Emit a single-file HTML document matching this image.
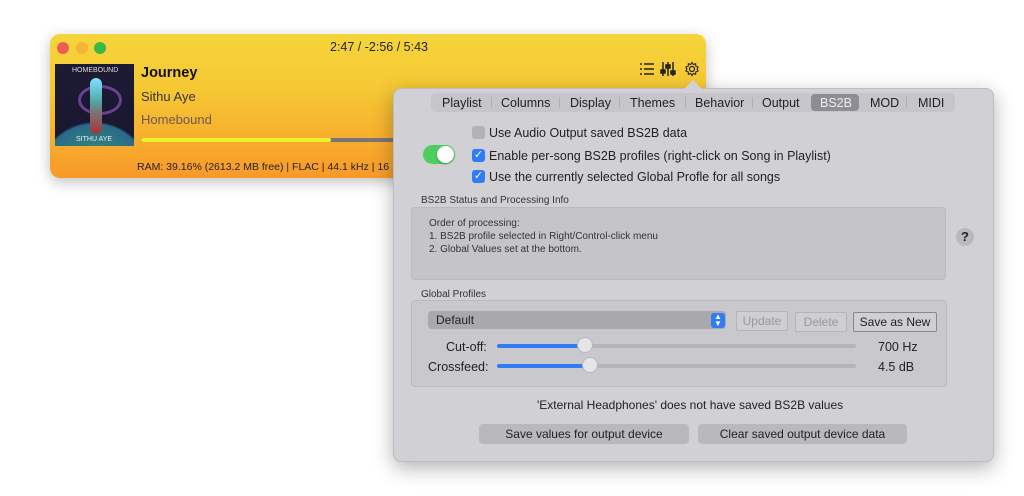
<!DOCTYPE html><html><head><style>
body{margin:0;width:1024px;height:496px;background:#fff;position:relative;overflow:hidden;font-family:"Liberation Sans",sans-serif;}
.a{position:absolute;white-space:nowrap}
.win{left:50px;top:34px;width:656px;height:144px;border-radius:10px;background:linear-gradient(#f5d53a 0%,#f6c733 40%,#f8992a 100%);box-shadow:0 4px 14px rgba(0,0,0,.25);overflow:hidden}
.dot{width:12px;height:12px;border-radius:6px;top:42px}
.pop{left:393px;top:88px;width:599px;height:372px;background:#d1d0d4;border-radius:8px;box-shadow:0 6px 20px rgba(0,0,0,.3);border:1px solid #bdbcc0}
.t{font-size:12.5px;color:#222;top:96px}
.sep{width:1px;height:11px;background:#b0afb4;top:97px}
.cb{width:13px;height:13px;border-radius:3px;background:#2f7cf6;color:#fff;font-size:11px;line-height:13px;text-align:center}
.l{font-size:12.5px;color:#222}
.s{font-size:10px;color:#333}
.btn{border:1px solid #b5b4b8;background:#cfced2;font-size:12px;color:#999;text-align:center;line-height:18px;border-radius:2px}
.trk{height:4px;background:#b5b4b9;border-radius:2px}
.knob{width:14px;height:14px;border-radius:8px;background:#e5e5e7;border:1px solid #b8b8bb}
</style></head><body>
<div class="a win"></div>
<div class="a dot" style="left:57px;background:#ee5b55"></div>
<div class="a dot" style="left:76px;background:#f2b43a"></div>
<div class="a dot" style="left:94px;background:#3cb849"></div>
<div class="a" style="left:330px;top:40px;font-size:12.5px;color:#222">2:47 / -2:56 / 5:43</div>
<div class="a" style="left:55px;top:64px;width:79px;height:82px;background:radial-gradient(circle at 50% 140%,#3a9a6a 0,#2a6a8a 45%,#1a1830 47%,#1d1a33 100%)"></div>
<div class="a" style="left:78px;top:85px;width:38px;height:24px;border-radius:50%;border:3px solid #7a4aa8;opacity:.8"></div>
<div class="a" style="left:90px;top:78px;width:12px;height:56px;background:linear-gradient(#7fe1ff,#5aa 40%,#777 60%,#a33);border-radius:6px"></div>
<div class="a" style="left:72px;top:67px;font-size:7px;color:#ddd">HOMEBOUND</div>
<div class="a" style="left:76px;top:136px;font-size:7px;color:#eee">SITHU AYE</div>
<div class="a" style="left:141px;top:65px;font-size:14.5px;font-weight:bold;color:#111">Journey</div>
<div class="a" style="left:141px;top:89px;font-size:13px;color:#333">Sithu Aye</div>
<div class="a" style="left:141px;top:112px;font-size:13px;color:#6a5a52">Homebound</div>
<div class="a" style="left:141px;top:138px;width:254px;height:4px;background:#777"></div>
<div class="a" style="left:141px;top:138px;width:190px;height:4px;background:#eef22a;border-radius:2px"></div>
<div class="a" style="left:137px;top:161px;font-size:10.5px;color:#222">RAM: 39.16% (2613.2 MB free) | FLAC | 44.1 kHz | 16</div>
<svg class="a" style="left:638px;top:60px" width="66" height="18" viewBox="0 0 66 18">
<g stroke="#222" stroke-width="1.5" fill="none"><path d="M2 4h2M6 4h10M2 9h2M6 9h10M2 14h2M6 14h10"/>
<path d="M25 2v14M30 2v14M35 2v14"/><rect x="23" y="10" width="4" height="3" fill="#222"/><rect x="28" y="5" width="4" height="3" fill="#222"/><rect x="33" y="11" width="4" height="3" fill="#222"/>
<circle cx="54" cy="9" r="2.5" stroke-width="1.2"/><path d="M54 2.5l1.3 2 2.3-.8 .2 2.4 2.3.9-1 2 1 2-2.3.9-.2 2.4-2.3-.8-1.3 2-1.3-2-2.3.8-.2-2.4-2.3-.9 1-2-1-2 2.3-.9.2-2.4 2.3.8z" stroke-width="1.1"/></g></svg>
<div class="a pop"></div>
<div class="a" style="left:684px;top:80px;width:0;height:0;border-left:9px solid transparent;border-right:9px solid transparent;border-bottom:9px solid #d1d0d4"></div>
<div class="a" style="left:431px;top:93px;width:524px;height:19px;background:#c6c5ca;border-radius:5px"></div>
<div class="a" style="left:811px;top:94px;width:48px;height:17px;background:#8e8d93;border-radius:4px"></div>
<div class="a sep" style="left:491px"></div><div class="a sep" style="left:559px"></div><div class="a sep" style="left:619px"></div><div class="a sep" style="left:685px"></div><div class="a sep" style="left:752px"></div><div class="a sep" style="left:906px"></div>
<div class="a t" style="left:442px">Playlist</div>
<div class="a t" style="left:501px">Columns</div>
<div class="a t" style="left:570px">Display</div>
<div class="a t" style="left:630px">Themes</div>
<div class="a t" style="left:695px">Behavior</div>
<div class="a t" style="left:762px">Output</div>
<div class="a t" style="left:820px;color:#eee">BS2B</div>
<div class="a t" style="left:870px">MOD</div>
<div class="a t" style="left:918px">MIDI</div>
<div class="a" style="left:472px;top:126px;width:13px;height:13px;border-radius:3px;background:#b3b2b6"></div>
<div class="a l" style="left:489px;top:126px">Use Audio Output saved BS2B data</div>
<div class="a cb" style="left:472px;top:149px">✓</div>
<div class="a l" style="left:489px;top:149px">Enable per-song BS2B profiles (right-click on Song in Playlist)</div>
<div class="a cb" style="left:472px;top:170px">✓</div>
<div class="a l" style="left:489px;top:170px">Use the currently selected Global Profle for all songs</div>
<div class="a" style="left:423px;top:145px;width:32px;height:19px;border-radius:10px;background:#4ccf5e"></div>
<div class="a" style="left:437px;top:146px;width:17px;height:17px;border-radius:9px;background:#fff;box-shadow:0 1px 2px rgba(0,0,0,.3)"></div>
<div class="a s" style="left:421px;top:195px">BS2B Status and Processing Info</div>
<div class="a" style="left:411px;top:207px;width:533px;height:71px;background:#c5c4c8;border:1px solid #bbbabe;border-radius:4px"></div>
<div class="a s" style="left:429px;top:217px;line-height:13px">Order of processing:<br>1. BS2B profile selected in Right/Control-click menu<br>2. Global Values set at the bottom.</div>
<div class="a" style="left:956px;top:228px;width:18px;height:18px;border-radius:9px;background:#b9b8bc;font-size:13px;font-weight:bold;text-align:center;line-height:18px;color:#222">?</div>
<div class="a s" style="left:421px;top:289px">Global Profiles</div>
<div class="a" style="left:411px;top:300px;width:534px;height:85px;background:#c9c8cc;border:1px solid #bbbabe;border-radius:4px"></div>
<div class="a" style="left:428px;top:311px;width:298px;height:18px;background:#a9a8ad;border-radius:4px"></div>
<div class="a l" style="left:436px;top:313px;font-size:12px">Default</div>
<div class="a" style="left:711px;top:313px;width:14px;height:15px;background:#2f7cf6;border-radius:3px;color:#fff;font-size:8px;text-align:center;line-height:7px">▲<br>▼</div>
<div class="a btn" style="left:736px;top:311px;width:50px">Update</div>
<div class="a btn" style="left:795px;top:312px;width:50px">Delete</div>
<div class="a btn" style="left:853px;top:312px;width:82px;color:#222;border-color:#888">Save as New</div>
<div class="a l" style="left:446px;top:340px">Cut-off:</div>
<div class="a l" style="left:428px;top:360px">Crossfeed:</div>
<div class="a trk" style="left:497px;top:344px;width:359px"></div>
<div class="a trk" style="left:497px;top:344px;width:88px;background:#2f7cf6"></div>
<div class="a knob" style="left:577px;top:337px"></div>
<div class="a trk" style="left:497px;top:364px;width:359px"></div>
<div class="a trk" style="left:497px;top:364px;width:92px;background:#2f7cf6"></div>
<div class="a knob" style="left:582px;top:357px"></div>
<div class="a l" style="left:878px;top:340px">700 Hz</div>
<div class="a l" style="left:878px;top:360px">4.5 dB</div>
<div class="a l" style="left:537px;top:398px;font-size:12px">'External Headphones' does not have saved BS2B values</div>
<div class="a btn" style="left:479px;top:424px;width:208px;background:#b9b8bc;color:#222;border-color:#b9b8bc;border-radius:4px">Save values for output device</div>
<div class="a btn" style="left:698px;top:424px;width:207px;background:#b9b8bc;color:#222;border-color:#b9b8bc;border-radius:4px">Clear saved output device data</div>
</body></html>
